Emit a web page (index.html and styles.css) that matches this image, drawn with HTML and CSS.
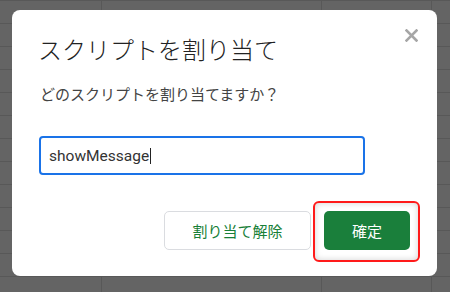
FILE: index.html
```html
<!DOCTYPE html>
<html lang="ja">
<head>
  <meta charset="UTF-8" />
  <meta name="viewport" content="width=device-width, initial-scale=1.0" />
  <title>スクリプトを割り当て</title>
  <link rel="stylesheet" href="styles.css">
</head>
<body>
  <div class="sheet">
    <div class="dialog">
      <button class="close" aria-label="閉じる">
        <svg width="13" height="13" viewBox="0 0 13 13">
          <path d="M1.5 1.5 L11.5 11.5 M11.5 1.5 L1.5 11.5" stroke="#a6a6a6" stroke-width="2.6" stroke-linecap="square" />
        </svg>
      </button>
      <h1 class="title">スクリプトを割り当て</h1>
      <p class="question">どのスクリプトを割り当てますか？</p>
      <div class="field">
        <span class="value">showMessage</span><span class="caret"></span>
      </div>
      <div class="actions">
        <button class="btn btn-secondary">割り当て解除</button>
        <div class="highlight">
          <button class="btn btn-primary">確定</button>
        </div>
      </div>
    </div>
  </div>
</body>
</html>
```

FILE: styles.css
```css
* {
  margin: 0;
  padding: 0;
  box-sizing: border-box;
}

body {
  font-family: Roboto, "Noto Sans CJK JP", sans-serif;
  background: #646464;
  overflow: hidden;
}

.sheet {
  width: 450px;
  height: 292px;
  padding: 10px 13px 16px 12px;
  background-color: #646464;
  background-image:
    linear-gradient(to bottom, #585858 1px, transparent 1px),
    linear-gradient(to right, transparent 101px, #585858 101px, #585858 102px, transparent 102px,
      transparent 321px, #585858 321px, #585858 322px, transparent 322px,
      transparent 431px, #585858 431px, #585858 432px, transparent 432px);
  background-size: 100% 23px, 100% 100%;
  background-repeat: repeat, no-repeat;
}

.dialog {
  position: relative;
  width: 425px;
  height: 266px;
  background: #fff;
  border-radius: 8px;
  padding: 25px 27px 26px 27px;
}

.close {
  position: absolute;
  top: 19px;
  right: 19px;
  width: 13px;
  height: 13px;
  border: none;
  background: none;
  display: flex;
}

.title {
  font-size: 24px;
  font-weight: 300;
  line-height: 32px;
  color: #222;
  margin-left: -1px;
}

.question {
  font-size: 15px;
  line-height: 20px;
  color: #444;
  margin-top: 18px;
  margin-left: 1px;
}

.field {
  width: 326px;
  height: 39px;
  margin-top: 31px;
  border: 2px solid #1a73e8;
  border-radius: 4px;
  padding: 0 8px;
  display: flex;
  align-items: center;
}

.value {
  font-size: 15.5px;
  color: #333;
}

.caret {
  width: 1px;
  height: 16px;
  background: #222;
  margin-left: 1px;
}

.actions {
  margin-top: 36px;
  display: flex;
  justify-content: flex-end;
  gap: 13px;
}

.btn {
  font-family: Roboto, "Noto Sans CJK JP", sans-serif;
  font-size: 15px;
  height: 39px;
  border-radius: 5px;
  cursor: pointer;
}

.btn-secondary {
  width: 147px;
  background: #fff;
  border: 1px solid #dadce0;
  color: #188038;
}

.btn-primary {
  width: 86px;
  background: #1a7f3b;
  border: none;
  color: #fff;
}

.highlight {
  position: relative;
  display: flex;
}

/* 赤枠の注釈 */
.highlight::after {
  content: "";
  position: absolute;
  top: -10px;
  bottom: -12px;
  left: -11px;
  right: -10px;
  border: 2px solid #ff1a1a;
  border-radius: 6px;
  box-shadow: inset 0 0 6px rgba(0,0,0,0.18);
  pointer-events: none;
}
```
